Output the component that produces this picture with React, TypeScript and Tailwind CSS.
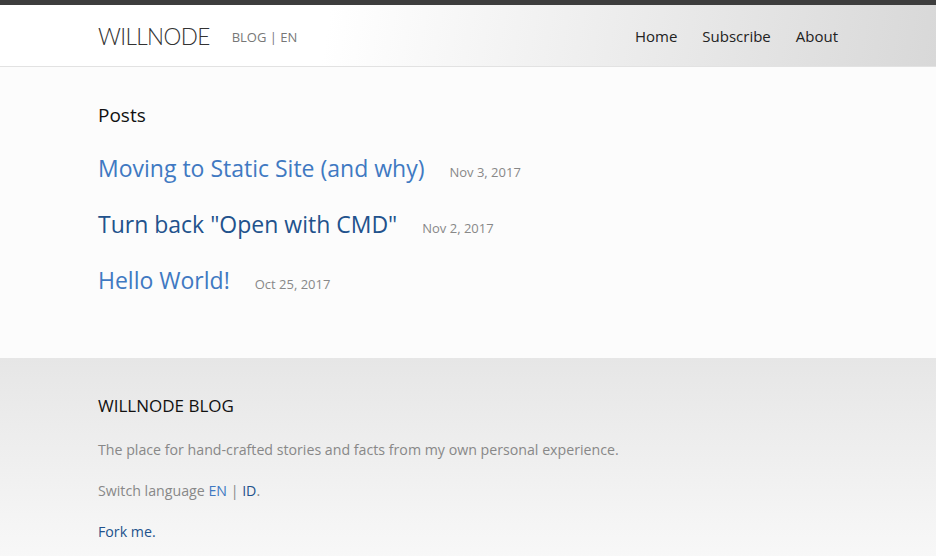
const posts = [
  { title: 'Moving to Static Site (and why)', date: 'Nov 3, 2017', visited: false },
  { title: 'Turn back "Open with CMD"', date: 'Nov 2, 2017', visited: true },
  { title: 'Hello World!', date: 'Oct 25, 2017', visited: false },
];

export default function App() {
  return (
    <div className="min-h-[556px] flex flex-col bg-[#fcfcfc] font-['Open_Sans',sans-serif]">
      <div className="h-[5px] bg-[#3d3d3d]" />
      <header className="h-[62px] border-b border-[#e2e2e2] bg-[linear-gradient(100deg,#ffffff_35%,#d8d8d8_100%)]">
        <div className="w-[740px] mx-auto h-full pt-[2px] flex items-center justify-between">
          <div className="flex items-center gap-[22px]">
            <a href="#" className="font-['Lato',sans-serif] font-light text-[22.5px] text-[#333] tracking-[-0.6px]">WILLNODE</a>
            <span className="text-[13px] text-[#777] pt-[2px]">BLOG | EN</span>
          </div>
          <nav className="flex gap-[25px] text-[15px] text-[#222]">
            <a href="#">Home</a>
            <a href="#">Subscribe</a>
            <a href="#">About</a>
          </nav>
        </div>
      </header>

      <main className="w-[740px] mx-auto pt-[32px] pb-[56px]">
        <h2 className="text-[19px] text-[#111] leading-[32px]">Posts</h2>
        <ul className="mt-[19px] flex flex-col gap-[16px]">
          {posts.map((p, i) => (
            <li key={i} className="flex items-baseline gap-[25px] leading-[36px]">
              <a href="#" className={`text-[23px] ${p.visited ? 'text-[#22528c]' : 'text-[#4079c2]'}`}>{p.title}</a>
              <span className="text-[13px] text-[#888]">{p.date}</span>
            </li>
          ))}
        </ul>
      </main>

      <footer className="flex-1 bg-[linear-gradient(180deg,#e6e6e6,#f8f8f8)] pt-[36px] pb-[16px]">
        <div className="w-[740px] mx-auto">
          <h3 className="text-[17px] text-[#111] leading-[24px]">WILLNODE BLOG</h3>
          <div className="mt-[19px] flex flex-col gap-[16px] text-[14.2px] text-[#888] leading-[25px]">
            <p>The place for hand-crafted stories and facts from my own personal experience.</p>
            <p>
              Switch language <a href="#" className="text-[#4079c2]">EN</a> | <a href="#" className="text-[#22528c]">ID</a>.
            </p>
            <p><a href="#" className="text-[#22528c]">Fork me.</a></p>
          </div>
        </div>
      </footer>
    </div>
  );
}
